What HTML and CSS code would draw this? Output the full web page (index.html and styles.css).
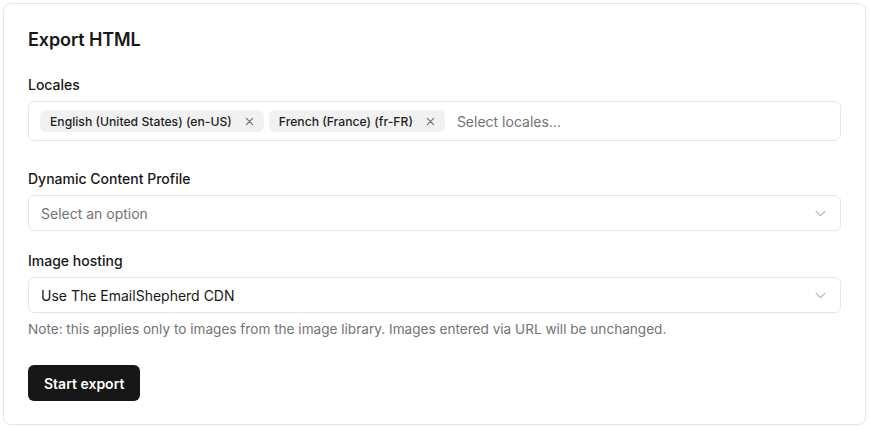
FILE: index.html
```html
<!DOCTYPE html>
<html>
<head>
<meta charset="utf-8">
<link rel="stylesheet" href="styles.css">
</head>
<body>
<div class="card">
  <h2 class="title">Export HTML</h2>

  <div class="field field-locales">
    <label class="label">Locales</label>
    <div class="multi">
      <span class="chip">English (United States) (en-US)
        <svg class="chip-x" viewBox="0 0 10 10" width="9" height="9"><path d="M1.5 1.5l7 7M8.5 1.5l-7 7" stroke="#6b6b6b" stroke-width="1.2" stroke-linecap="round"/></svg>
      </span>
      <span class="chip">French (France) (fr-FR)
        <svg class="chip-x" viewBox="0 0 10 10" width="9" height="9"><path d="M1.5 1.5l7 7M8.5 1.5l-7 7" stroke="#6b6b6b" stroke-width="1.2" stroke-linecap="round"/></svg>
      </span>
      <span class="placeholder">Select locales...</span>
    </div>
  </div>

  <div class="field">
    <label class="label">Dynamic Content Profile</label>
    <div class="select">
      <span class="placeholder">Select an option</span>
      <svg class="chev" viewBox="0 0 12 8" width="11" height="7"><path d="M1 1.5l5 5 5-5" fill="none" stroke="#b5b5b5" stroke-width="1.4" stroke-linecap="round" stroke-linejoin="round"/></svg>
    </div>
  </div>

  <div class="field field-hosting">
    <label class="label">Image hosting</label>
    <div class="select">
      <span class="value">Use The EmailShepherd CDN</span>
      <svg class="chev" viewBox="0 0 12 8" width="11" height="7"><path d="M1 1.5l5 5 5-5" fill="none" stroke="#b5b5b5" stroke-width="1.4" stroke-linecap="round" stroke-linejoin="round"/></svg>
    </div>
    <p class="note">Note: this applies only to images from the image library. Images entered via URL will be unchanged.</p>
  </div>

  <button class="btn">Start export</button>
</div>
</body>
</html>
```
FILE: styles.css
```css
* { box-sizing: border-box; }
html, body { margin: 0; padding: 0; background: #ffffff; }
body {
  font-family: Inter, "Noto Sans", "Liberation Sans", sans-serif;
  color: #171717;
  padding: 3px 4px 5px 3px;
}
.card {
  width: 863px;
  height: 422px;
  border: 1px solid #e6e6e6;
  border-radius: 8px;
  padding: 22px 24px 23px 24px;
  display: flex;
  flex-direction: column;
  align-items: flex-start;
  box-shadow: 0 1px 2px rgba(0,0,0,0.03);
}
.title {
  margin: 0;
  font-size: 18px;
  line-height: 28px;
  font-weight: 600;
  letter-spacing: -0.1px;
}
.field {
  width: 100%;
  display: flex;
  flex-direction: column;
  margin-top: 21px;
}
.field-locales { margin-bottom: 7px; }
.field-hosting { margin-top: 20px; }
.label {
  font-size: 14px;
  line-height: 20px;
  font-weight: 500;
  margin-bottom: 6px;
}
.multi {
  height: 40px;
  border: 1px solid #e6e6e6;
  border-radius: 6px;
  display: flex;
  align-items: center;
  padding: 0 11px;
  gap: 5px;
}
.chip {
  display: inline-flex;
  align-items: center;
  height: 22px;
  background: #f1f1f1;
  border-radius: 6px;
  padding: 0 10px;
  font-size: 12.2px;
  font-weight: 500;
  color: #1f1f1f;
}
.chip-x { margin-left: 13px; }
.multi .placeholder { margin-left: 7px; font-size: 14px; }
.placeholder { color: #737373; font-size: 14px; }
.value { font-size: 14px; color: #171717; }
.select {
  height: 36px;
  border: 1px solid #e6e6e6;
  border-radius: 6px;
  display: flex;
  align-items: center;
  justify-content: space-between;
  padding: 0 14px 0 12px;
  box-shadow: 0 1px 1px rgba(0,0,0,0.02);
}
.chev { display: block; }
.note {
  margin: 6px 0 0 0;
  font-size: 13.6px;
  line-height: 20px;
  color: #737373;
}
.btn {
  margin-top: 26px;
  height: 36px;
  padding: 0 16px;
  border: none;
  border-radius: 6px;
  background: #171717;
  color: #ffffff;
  font-family: inherit;
  font-size: 14px;
  font-weight: 600;
}
```
